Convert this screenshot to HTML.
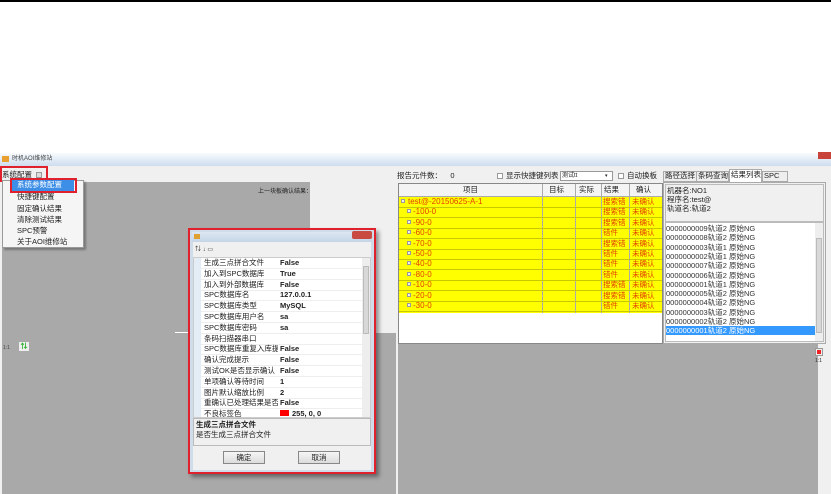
<!DOCTYPE html><html><head><meta charset="utf-8"><style>
*{margin:0;padding:0;box-sizing:border-box}
body{width:831px;height:494px;background:#fff;position:relative;overflow:hidden;font-family:"Liberation Sans","Noto Sans CJK SC",sans-serif;font-size:7.5px;color:#222}
.a{position:absolute}
.t{position:absolute;white-space:nowrap;line-height:10px}
</style></head><body>
<div class="a" style="left:0;top:0;width:831px;height:2px;background:#000"></div>
<div class="a" style="left:0;top:153px;width:831px;height:13px;background:linear-gradient(#f8fbfe,#cddcee)"></div>
<div class="a" style="left:2px;top:156px;width:7px;height:6px;background:#e8a030"></div>
<div class="t" style="left:12px;top:154px;font-size:6px;color:#444">时机AOI维修站</div>
<div class="a" style="left:818px;top:152px;width:13px;height:7px;background:#c8443a"></div>
<div class="a" style="left:0;top:166px;width:831px;height:328px;background:#f0f0f0"></div>
<div class="a" style="left:2px;top:182px;width:308px;height:312px;background:#a9a9a9"></div>
<div class="a" style="left:175px;top:333px;width:221px;height:161px;background:#a9a9a9"></div>
<div class="a" style="left:175px;top:332px;width:25px;height:1px;background:#fff"></div>
<div class="t" style="left:258px;top:187px;font-size:6px">上一块板确认结果：</div>
<div class="t" style="left:3px;top:343px;font-size:5px;color:#444">1:1</div>
<div class="a" style="left:19px;top:342px;width:10px;height:9px;background:#eee;color:#1a1;font-size:7px;font-weight:bold;line-height:9px;text-align:center">⇅</div>
<div class="t" style="left:2px;top:170px;font-size:7.5px">系统配置</div>
<div class="a" style="left:36px;top:172px;width:6px;height:6px;background:#ddd;border:1px solid #999"></div>
<div class="a" style="left:0;top:166px;width:48px;height:16px;border:2px solid #e0202c"></div>
<div class="a" style="left:2px;top:180px;width:82px;height:68px;background:#f5f5f5;border:1px solid #999;box-shadow:2px 2px 2px rgba(0,0,0,.3)"></div>
<div class="a" style="left:12px;top:180px;width:62px;height:11px;background:#3c8ee6"></div>
<div class="a" style="left:10px;top:178px;width:67px;height:15px;border:2px solid #e0202c"></div>
<div class="t" style="left:17px;top:180px;color:#fff">系统参数配置</div>
<div class="t" style="left:17px;top:192px">快捷键配置</div>
<div class="t" style="left:17px;top:204px">固定确认结果</div>
<div class="t" style="left:17px;top:215px">清除测试结果</div>
<div class="t" style="left:17px;top:226px">SPC预警</div>
<div class="t" style="left:17px;top:237px">关于AOI维修站</div>
<div class="t" style="left:397px;top:171px">报告元件数：&nbsp;&nbsp;&nbsp;&nbsp;0</div>
<div class="a" style="left:497px;top:173px;width:6px;height:6px;border:1px solid #999;background:#fff"></div>
<div class="t" style="left:506px;top:171px">显示快捷键列表</div>
<div class="a" style="left:560px;top:171px;width:53px;height:10px;border:1px solid #999;background:#fff"></div>
<div class="t" style="left:562px;top:171px;font-size:6px">测试tt</div>
<div class="t" style="left:605px;top:171px;font-size:5px">▾</div>
<div class="a" style="left:618px;top:173px;width:6px;height:6px;border:1px solid #999;background:#fff"></div>
<div class="t" style="left:627px;top:171px">自动换板</div>
<div class="a" style="left:398px;top:183px;width:265px;height:161px;background:#fff;border:1px solid #888"></div>
<div class="a" style="left:399px;top:184px;width:263px;height:13px;background:#f4f4f4;border-bottom:1px solid #aaa"></div>
<div class="t" style="left:463px;top:185px">项目</div>
<div class="t" style="left:549px;top:185px">目标</div>
<div class="t" style="left:579px;top:185px">实际</div>
<div class="t" style="left:604px;top:185px">结果</div>
<div class="t" style="left:636px;top:185px">确认</div>
<div class="a" style="left:399px;top:197px;width:263px;height:116px;background:#ffff00"></div>
<div class="a" style="left:542px;top:184px;width:1px;height:129px;background:#aaa"></div>
<div class="a" style="left:575px;top:184px;width:1px;height:129px;background:#aaa"></div>
<div class="a" style="left:601px;top:184px;width:1px;height:129px;background:#aaa"></div>
<div class="a" style="left:629px;top:184px;width:1px;height:129px;background:#aaa"></div>
<div id="rows"></div>
<div class="a" style="left:663px;top:171px;width:37px;height:11px;border:1px solid #aaa;background:#eee"></div><div class="t" style="left:665px;top:171px">路径选择</div>
<div class="a" style="left:696px;top:171px;width:33px;height:11px;border:1px solid #aaa;background:#eee"></div><div class="t" style="left:698px;top:171px">条码查询</div>
<div class="a" style="left:729px;top:169px;width:33px;height:14px;border:1px solid #aaa;border-bottom:none;background:#fff"></div><div class="t" style="left:731px;top:170px">结果列表</div>
<div class="a" style="left:762px;top:171px;width:26px;height:11px;border:1px solid #aaa;background:#eee"></div><div class="t" style="left:764px;top:171px">SPC</div>
<div class="a" style="left:663px;top:182px;width:163px;height:162px;border:1px solid #aaa;background:#f0f0f0"></div>
<div class="a" style="left:665px;top:184px;width:159px;height:38px;border:1px solid #bbb;background:#f0f0f0"></div>
<div class="t" style="left:667px;top:186px">机器名:NO1</div>
<div class="t" style="left:667px;top:195px">程序名:test@</div>
<div class="t" style="left:667px;top:204px">轨道名:轨道2</div>
<div class="a" style="left:665px;top:222px;width:159px;height:120px;border:1px solid #bbb;background:#fff"></div>
<div class="a" style="left:815px;top:223px;width:8px;height:118px;background:#eee"></div>
<div class="a" style="left:816px;top:238px;width:6px;height:95px;background:#d8d8d8;border:1px solid #bbb"></div>
<div id="list"></div>
<div class="a" style="left:398px;top:344px;width:420px;height:150px;background:#a9a9a9"></div>
<div class="a" style="left:815px;top:348px;width:8px;height:8px;background:#eee;border:1px solid #999"></div>
<div class="a" style="left:817px;top:350px;width:4px;height:4px;background:#e22"></div>
<div class="t" style="left:815px;top:356px;font-size:5px">1:1</div>
<div class="a" style="left:188px;top:228px;width:188px;height:246px;border:2px solid #e0202c;background:#cfdcea;box-shadow:3px 3px 4px rgba(0,0,0,.4)"></div>
<div class="a" style="left:192px;top:232px;width:180px;height:10px;background:linear-gradient(#dde7f2,#c5d5e8)"></div>
<div class="a" style="left:194px;top:234px;width:6px;height:5px;background:#e0a030"></div>
<div class="a" style="left:352px;top:231px;width:20px;height:8px;background:#c84a40;border-radius:2px"></div>
<div class="a" style="left:193px;top:242px;width:178px;height:228px;background:#f0f0f0"></div>
<div class="t" style="left:195px;top:245px;font-size:6px">⇅ ↓ ▭</div>
<div class="a" style="left:193px;top:257px;width:178px;height:161px;background:#fff;border:1px solid #ccc"></div>
<div class="a" style="left:194px;top:258px;width:7px;height:159px;background:#e4ecf5"></div>
<div class="a" style="left:362px;top:258px;width:8px;height:159px;background:#eee"></div>
<div class="a" style="left:363px;top:266px;width:6px;height:68px;background:#d8d8d8;border:1px solid #bbb"></div>
<div id="props"></div>
<div class="a" style="left:193px;top:418px;width:178px;height:28px;background:#f0f0f0;border:1px solid #bbb"></div>
<div class="t" style="left:196px;top:420px;font-weight:bold">生成三点拼合文件</div>
<div class="t" style="left:196px;top:430px">是否生成三点拼合文件</div>
<div class="a" style="left:223px;top:451px;width:42px;height:13px;border:1px solid #888;background:linear-gradient(#f6f6f6,#dcdcdc);text-align:center;line-height:11px">确定</div>
<div class="a" style="left:298px;top:451px;width:42px;height:13px;border:1px solid #888;background:linear-gradient(#f6f6f6,#dcdcdc);text-align:center;line-height:11px">取消</div>
<script>
var r=[["test@-20150625-A-1","搜索错",0],["-100-0","搜索错",1],["-90-0","搜索错",1],["-60-0","错件",1],["-70-0","搜索错",1],["-50-0","错件",1],["-40-0","错件",1],["-80-0","错件",1],["-10-0","搜索错",1],["-20-0","搜索错",1],["-30-0","错件",1]];
var h="";r.forEach(function(x,i){var y=197+i*10.4;h+='<div class="a" style="left:399px;top:'+(y+10)+'px;width:263px;height:1px;background:#c8c800"></div>';
h+='<div class="a" style="left:'+(x[2]?407:401)+'px;top:'+(y+2)+'px;width:4px;height:4px;border:1px solid #999;background:#eee"></div>';
h+='<div class="t" style="left:'+(x[2]?413:408)+'px;top:'+y+'px;color:#e04000;font-size:8px">'+x[0]+'</div><div class="t" style="left:603px;top:'+y+'px;color:#e04000">'+x[1]+'</div><div class="t" style="left:632px;top:'+y+'px;color:#e04000">未确认</div>';});
document.getElementById("rows").innerHTML=h;
var l=["9轨道2","8轨道2","3轨道1","2轨道1","7轨道2","6轨道2","1轨道1","5轨道2","4轨道2","3轨道2","2轨道2","1轨道2"];h="";
l.forEach(function(x,i){var y=224+i*9.3;var s=i==11;h+='<div class="t" style="left:666px;top:'+y+'px;width:149px;height:9px;line-height:9px;'+(s?'background:#3399ff;color:#fff':'color:#333')+'">000000000'+x+' 原始NG</div>';});
document.getElementById("list").innerHTML=h;
var p=[["生成三点拼合文件","False"],["加入到SPC数据库","True"],["加入到外部数据库","False"],["SPC数据库名","127.0.0.1"],["SPC数据库类型","MySQL"],["SPC数据库用户名","sa"],["SPC数据库密码","sa"],["条码扫描器串口",""],["SPC数据库重复入库提示","False"],["确认完成提示","False"],["测试OK是否显示确认","False"],["单项确认等待时间","1"],["图片默认缩放比例","2"],["重确认已处理结果是否?","False"],["不良标签色","255, 0, 0"]];h="";
p.forEach(function(x,i){var y=258+i*10.8;if(y>410)return;h+='<div class="a" style="left:201px;top:'+(y+10)+'px;width:161px;height:1px;background:#eee"></div><div class="t" style="left:204px;top:'+y+'px;width:74px;overflow:hidden">'+x[0]+'</div><div class="t" style="left:280px;top:'+y+'px;font-weight:bold">'+(i==14?'<span style="display:inline-block;width:9px;height:6px;background:#f00;margin-right:3px"></span>':'')+x[1]+'</div>';});
document.getElementById("props").innerHTML=h;
</script>
</body></html>
